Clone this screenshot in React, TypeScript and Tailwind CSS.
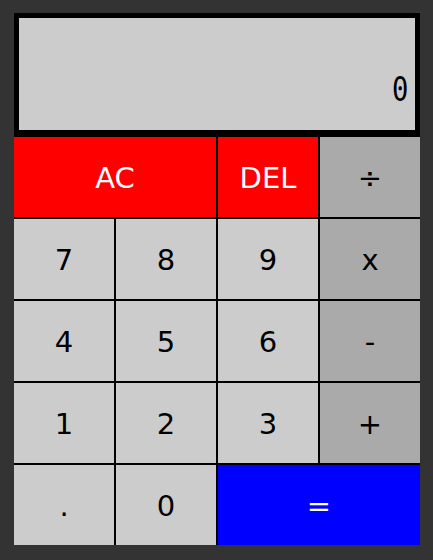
import React from 'react';

type Key = {
  label: string;
  span?: boolean;
  kind: 'num' | 'op' | 'clear' | 'eq';
};

const keys: Key[] = [
  { label: 'AC', span: true, kind: 'clear' },
  { label: 'DEL', kind: 'clear' },
  { label: '÷', kind: 'op' },
  { label: '7', kind: 'num' },
  { label: '8', kind: 'num' },
  { label: '9', kind: 'num' },
  { label: 'x', kind: 'op' },
  { label: '4', kind: 'num' },
  { label: '5', kind: 'num' },
  { label: '6', kind: 'num' },
  { label: '-', kind: 'op' },
  { label: '1', kind: 'num' },
  { label: '2', kind: 'num' },
  { label: '3', kind: 'num' },
  { label: '+', kind: 'op' },
  { label: '.', kind: 'num' },
  { label: '0', kind: 'num' },
  { label: '=', span: true, kind: 'eq' },
];

const kindClass: Record<Key['kind'], string> = {
  num: 'bg-[#cccccc] text-black',
  op: 'bg-[#aaaaaa] text-black',
  clear: 'bg-[#ff0000] text-white',
  eq: 'bg-[#0000ff] text-white',
};

export default function App() {
  return (
    <div className="w-full h-[560px] bg-[#333333] pt-[13px] pl-[14px]">
      <div className="w-[406px] grid grid-cols-4 gap-[2px] bg-black">
        <div className="col-span-4 h-[122px] border-[5px] border-black bg-[#cccccc] flex items-end justify-end pr-[7px] pb-[24px]">
          <span className="text-[34px] leading-none text-black font-['DejaVu_Sans_Mono',monospace] scale-x-[0.8] origin-right">0</span>
        </div>
        {keys.map((k) => (
          <button
            key={k.label}
            className={`${k.span ? 'col-span-2' : ''} ${kindClass[k.kind]} h-[80px] pt-[3px] flex items-center justify-center text-[29px] font-['DejaVu_Sans',sans-serif]`}
          >
            {k.label}
          </button>
        ))}
      </div>
    </div>
  );
}
